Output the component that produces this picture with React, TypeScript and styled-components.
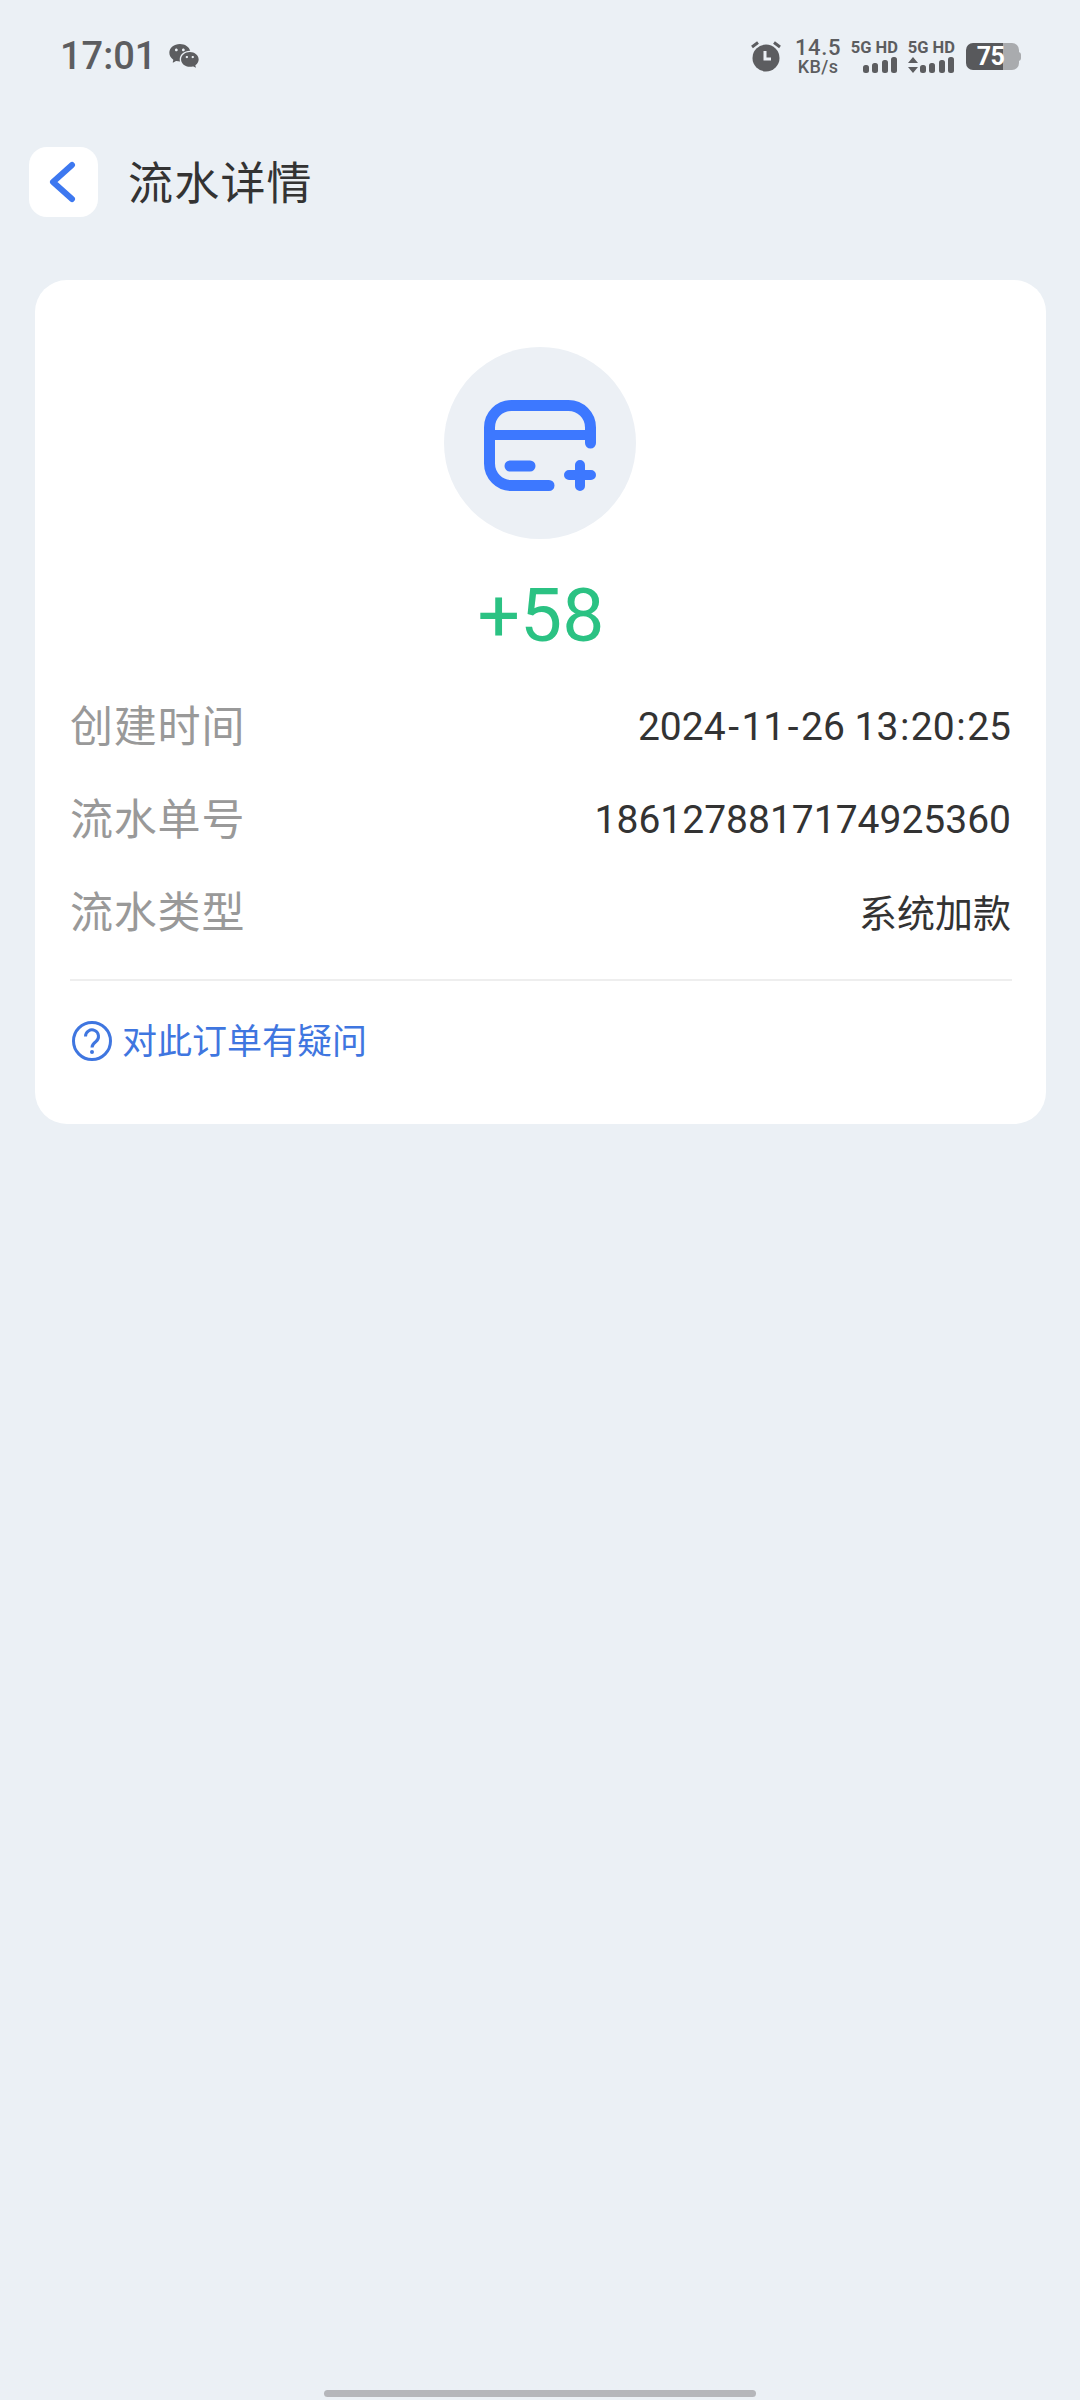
import styled, { createGlobalStyle } from "styled-components";
import { RiWechatFill } from "react-icons/ri";

const GlobalStyle = createGlobalStyle`
  html, body {
    margin: 0;
    padding: 0;
    background: #ebf0f5;
  }
  * {
    box-sizing: border-box;
  }
`;

const Page = styled.div`
  width: 1080px;
  height: 2400px;
  display: flex;
  flex-direction: column;
  background: #ebf0f5;
  font-family: Roboto, "Noto Sans CJK SC", sans-serif;
  color: #333333;
`;

const StatusBar = styled.div`
  height: 147px;
  padding: 33px 60px 0 60px;
  display: flex;
  justify-content: space-between;
  align-items: flex-start;
  color: #5c5d60;
`;

const StatusLeft = styled.div`
  display: flex;
  align-items: center;
  gap: 12px;
  height: 46px;
`;

const Clock = styled.span`
  font-size: 38px;
  line-height: 46px;
  font-weight: 500;
`;

const StatusRight = styled.div`
  display: flex;
  align-items: center;
  height: 46px;
  margin-right: 1px;
`;

const Speed = styled.div`
  display: flex;
  flex-direction: column;
  align-items: center;
  margin-left: 13px;
  width: 46px;
  font-weight: 500;
`;

const SpeedValue = styled.span`
  font-size: 22px;
  line-height: 20px;
  letter-spacing: 0.6px;
`;

const SpeedUnit = styled.span`
  font-size: 18px;
  line-height: 17px;
  letter-spacing: 0.4px;
`;

const Network = styled.div`
  display: flex;
  flex-direction: column;
  align-items: flex-end;
  width: 48px;
  margin-left: 9px;
`;

const NetworkLabel = styled.span`
  font-size: 16.5px;
  line-height: 17px;
  font-weight: 700;
  white-space: nowrap;
`;

const Battery = styled.div`
  width: 53px;
  height: 27px;
  margin-left: 11px;
  display: flex;
  align-items: center;
  justify-content: center;
  border-radius: 7px;
  background: linear-gradient(to right, #58595c 70%, #a9abae 70%);
  color: #ffffff;
  font-size: 25px;
  font-weight: 700;
  letter-spacing: -0.5px;
  position: relative;
  padding-right: 4px;

  &::after {
    content: "";
    position: absolute;
    right: -2px;
    top: 9px;
    width: 3px;
    height: 9px;
    border-radius: 0 3px 3px 0;
    background: #a9abae;
  }
`;

const Header = styled.div`
  display: flex;
  align-items: center;
  gap: 30px;
  padding-left: 29px;
  height: 70px;
`;

const BackButton = styled.div`
  width: 69px;
  height: 70px;
  padding-right: 3px;
  border-radius: 18px;
  background: #ffffff;
  display: flex;
  align-items: center;
  justify-content: center;
`;

const Title = styled.h1`
  margin: 0;
  padding-top: 5px;
  font-size: 45px;
  line-height: 70px;
  font-weight: 400;
  letter-spacing: 1.2px;
  color: #333333;
`;

const Card = styled.div`
  width: 1011px;
  margin: 63px 0 0 35px;
  padding: 67px 34px 63px 35px;
  border-radius: 32px;
  background: #ffffff;
  display: flex;
  flex-direction: column;
`;

const IconCircle = styled.div`
  width: 192px;
  height: 192px;
  margin-right: 2px;
  padding-top: 5px;
  border-radius: 50%;
  align-self: center;
  background: #ecf0f5;
  display: flex;
  align-items: center;
  justify-content: center;
`;

const Amount = styled.div`
  margin-top: 40px;
  text-align: center;
  font-size: 75px;
  line-height: 72px;
  color: #2bc283;
`;

const Rows = styled.div`
  margin-top: 28px;
  display: flex;
  flex-direction: column;
`;

const Row = styled.div`
  height: 93px;
  display: flex;
  align-items: center;
  justify-content: space-between;
`;

const Label = styled.span`
  padding-bottom: 6px;
  font-size: 43px;
  letter-spacing: 0.8px;
  color: #999999;
`;

const Value = styled.span<{ $cjk?: boolean }>`
  padding: ${(p) => (p.$cjk ? "0 1px 2px 0" : "2px 1px 0 0")};
  font-size: ${(p) => (p.$cjk ? "38px" : "39px")};
  color: #333333;
`;

const Separator = styled.span<{ $extra: number }>`
  margin: 0 ${(p) => p.$extra}px;
`;

const Divider = styled.div`
  margin-top: 21px;
  height: 2px;
  background: #eeeeee;
`;

const HelpLink = styled.div`
  margin-top: 40px;
  height: 40px;
  padding-left: 2px;
  display: flex;
  align-items: center;
  gap: 10px;
  font-size: 35px;
  color: #3f76e0;
`;

const HelpText = styled.span`
  padding-bottom: 6px;
`;

const HomeBar = styled.div`
  width: 432px;
  height: 7px;
  margin: auto 0 3px 324px;
  border-radius: 4px;
  background: #b5b6ba;
`;

const rows = [
  { label: "创建时间", value: "2024-11-26 13:20:25" },
  { label: "流水单号", value: "1861278817174925360" },
  { label: "流水类型", value: "系统加款", cjk: true },
];

// the date's - and : are wider in the reference than in Roboto
const renderValue = (value: string) =>
  value.split(/([-:])/).map((part, i) =>
    part === "-" || part === ":" ? (
      <Separator key={i} $extra={part === "-" ? 2.5 : 1.5}>
        {part}
      </Separator>
    ) : (
      part
    )
  );

const SignalBars = ({ arrows }: { arrows?: boolean }) => (
  <svg width="48" height="18" viewBox="0 0 48 18" fill="#5c5d60">
    {arrows && <path d="M4 1l5 6H-1zM4 17l5-6H-1z" transform="translate(2 0)" />}
    <rect x="13" y="9" width="6" height="8" rx="2.5" />
    <rect x="22" y="7" width="6" height="10" rx="2.5" />
    <rect x="32" y="4" width="6" height="13" rx="2.5" />
    <rect x="41" y="1" width="6" height="16" rx="2.5" />
  </svg>
);

const AlarmIcon = () => (
  <svg width="32" height="32" viewBox="0 0 32 32">
    <circle cx="16" cy="18" r="13.5" fill="#5c5d60" />
    <path d="M2 7l6-4.5M30 7l-6-4.5" stroke="#5c5d60" strokeWidth="3" fill="none" />
    <path d="M15 11v8h6" stroke="#ebf0f5" strokeWidth="3" fill="none" />
  </svg>
);

const CardPlusIcon = () => (
  <svg width="112" height="92" viewBox="0 0 112 92" fill="none" stroke="#3d78ff" strokeLinecap="round">
    <path
      d="M106.5 43V27.5a22 22 0 0 0-22-22H27.5a22 22 0 0 0-22 22V63.5a22 22 0 0 0 22 22H65"
      strokeWidth="11"
    />
    <path d="M6 35H106" strokeWidth="10" />
    <path d="M26 66H46" strokeWidth="11" />
    <path d="M85 75H107M96 65V86" strokeWidth="10" />
  </svg>
);

const HelpIcon = () => (
  <svg width="40" height="40" viewBox="0 0 40 40" fill="none" stroke="#3f76e0">
    <circle cx="20" cy="20" r="18.5" strokeWidth="3" />
    <path d="M13.5 15.5a6.5 6.5 0 1 1 10.5 5c-2.4 1.8-4 3-4 6" strokeWidth="3" />
    <circle cx="20" cy="31" r="2" fill="#3f76e0" stroke="none" />
  </svg>
);

export default function App() {
  return (
    <Page>
      <GlobalStyle />
      <StatusBar>
        <StatusLeft>
          <Clock>17:01</Clock>
          <RiWechatFill size={32} />
        </StatusLeft>
        <StatusRight>
          <AlarmIcon />
          <Speed>
            <SpeedValue>14.5</SpeedValue>
            <SpeedUnit>KB/s</SpeedUnit>
          </Speed>
          <Network>
            <NetworkLabel>5G HD</NetworkLabel>
            <SignalBars />
          </Network>
          <Network>
            <NetworkLabel>5G HD</NetworkLabel>
            <SignalBars arrows />
          </Network>
          <Battery>75</Battery>
        </StatusRight>
      </StatusBar>
      <Header>
        <BackButton>
          <svg width="30" height="42" viewBox="0 0 30 42" fill="none">
            <path d="M25 4L6 21l19 17" stroke="#3d78f0" strokeWidth="6" strokeLinecap="round" strokeLinejoin="round" />
          </svg>
        </BackButton>
        <Title>流水详情</Title>
      </Header>
      <Card>
        <IconCircle>
          <CardPlusIcon />
        </IconCircle>
        <Amount>+58</Amount>
        <Rows>
          {rows.map((row) => (
            <Row key={row.label}>
              <Label>{row.label}</Label>
              <Value $cjk={row.cjk}>{renderValue(row.value)}</Value>
            </Row>
          ))}
        </Rows>
        <Divider />
        <HelpLink>
          <HelpIcon />
          <HelpText>对此订单有疑问</HelpText>
        </HelpLink>
      </Card>
      <HomeBar />
    </Page>
  );
}
